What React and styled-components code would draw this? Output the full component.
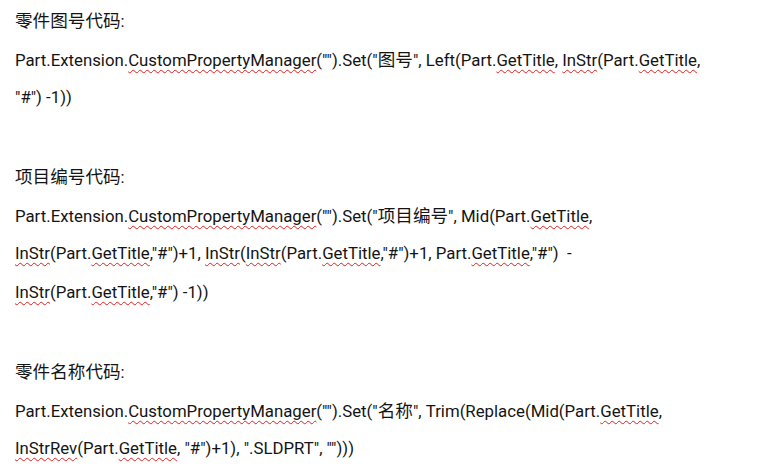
import React from 'react';
import styled, { createGlobalStyle } from 'styled-components';

const GlobalStyle = createGlobalStyle`
  html, body {
    margin: 0;
    padding: 0;
    background: #ffffff;
  }
`;

const Page = styled.div`
  width: 780px;
  height: 475px;
  overflow: hidden;
  background: #ffffff;
  padding: 0 0 0 15px;
  box-sizing: border-box;
  font-family: Roboto, "Noto Sans CJK SC", sans-serif;
  font-size: 16.8px;
  color: #141414;
`;

const Line = styled.div`
  height: 39px;
  line-height: 39px;
  white-space: pre;
`;

const Han = styled.span`
  font-family: "Noto Sans CJK SC", sans-serif;
  font-size: 17.6px;
`;

const Squiggle = styled.span`
  text-decoration: underline wavy #e02020;
  text-decoration-thickness: 1px;
  text-underline-offset: 3px;
  text-decoration-skip-ink: none;
`;

const S = ({ children }) => <Squiggle>{children}</Squiggle>;
const H = ({ children }) => <Han>{children}</Han>;

const blocks = [
  [
    <><H>零件图号代码</H>:</>,
    <>Part.Extension.<S>CustomPropertyManager</S>("").Set("<H>图号</H>", Left(Part.<S>GetTitle</S>, <S>InStr</S>(Part.<S>GetTitle</S>,</>,
    <>"#") -1))</>,
  ],
  [
    <><H>项目编号代码</H>:</>,
    <>Part.Extension.<S>CustomPropertyManager</S>("").Set("<H>项目编号</H>", Mid(Part.<S>GetTitle</S>,</>,
    <><S>InStr</S>(Part.<S>GetTitle</S>,"#")+1, <S>InStr</S>(<S>InStr</S>(Part.<S>GetTitle</S>,"#")+1, Part.<S>GetTitle</S>,"#"){'  -'}</>,
    <><S>InStr</S>(Part.<S>GetTitle</S>,"#") -1))</>,
  ],
  [
    <><H>零件名称代码</H>:</>,
    <>Part.Extension.<S>CustomPropertyManager</S>("").Set("<H>名称</H>", Trim(Replace(Mid(Part.<S>GetTitle</S>,</>,
    <><S>InStrRev</S>(Part.<S>GetTitle</S>, "#")+1), ".SLDPRT", "")))</>,
  ],
];

export default function App() {
  return (
    <Page>
      <GlobalStyle />
      {blocks.map((lines, i) => (
        <React.Fragment key={i}>
          {lines.map((l, j) => (
            <Line key={j}>{l}</Line>
          ))}
          {i < blocks.length - 1 && <Line />}
        </React.Fragment>
      ))}
    </Page>
  );
}
